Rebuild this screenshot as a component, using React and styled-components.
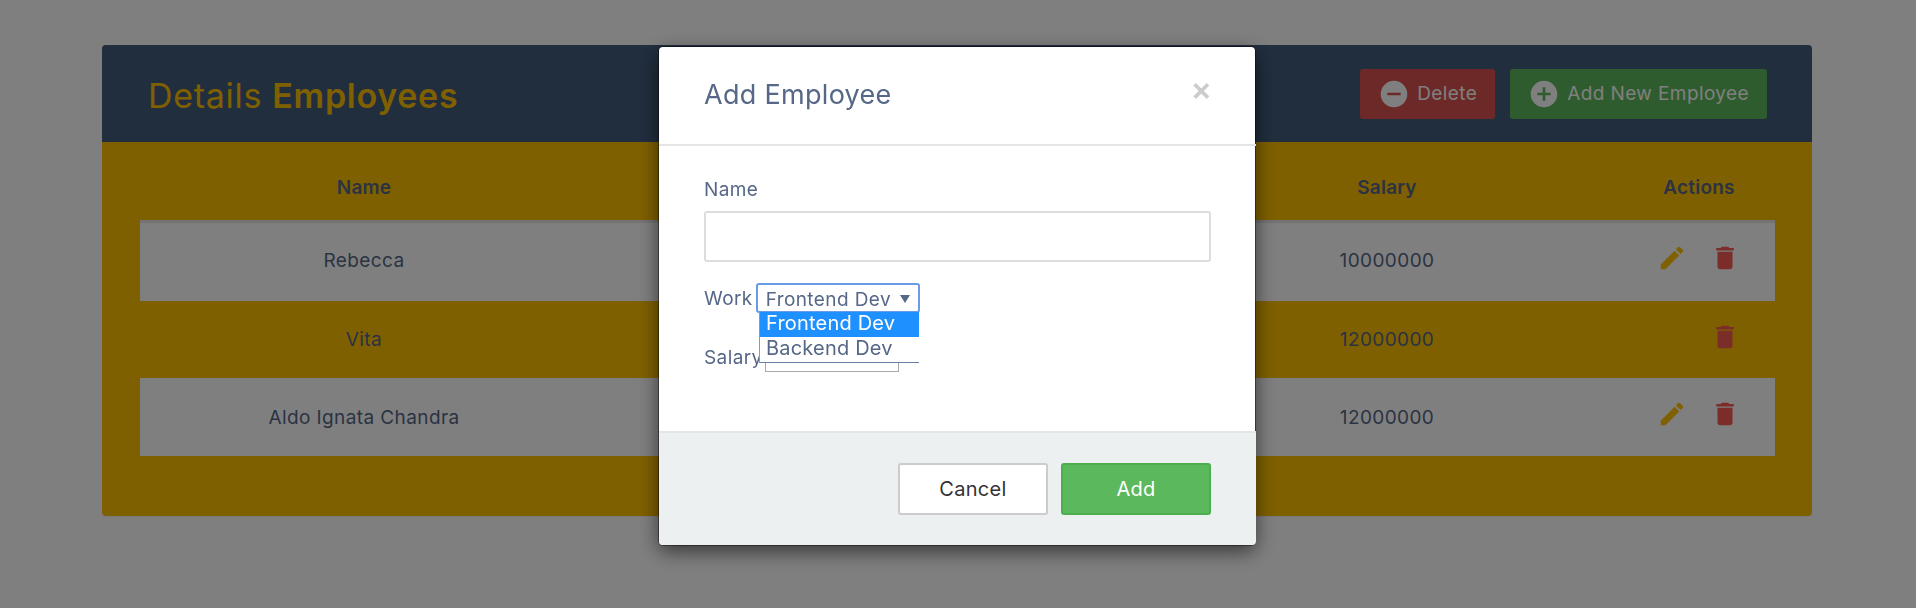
import React from 'react'
import styled, { createGlobalStyle } from 'styled-components'
import { MdAddCircle, MdDelete, MdEdit, MdRemoveCircle } from 'react-icons/md'

const GlobalStyle = createGlobalStyle`
    html, body {
        margin: 0;
        height: 100%;
        overflow: hidden;
        background: #fff;
        color: #566787;
        font-family: Inter, "Open Sans", sans-serif;
        font-size: 16px;
    }
    * {
        box-sizing: border-box;
    }
`

const Page = styled.div`
    height: 608px;
    padding: 45px 104px 0 102px;
`

const Card = styled.div`
    height: 471px;
    background: #ffc000;
    border-radius: 4px;
    box-shadow: 0 1px 1px rgba(0, 0, 0, .05);
    overflow: hidden;
`

const CardHeader = styled.div`
    height: 97px;
    padding: 0 45px 0 46px;
    display: flex;
    align-items: center;
    justify-content: space-between;
    background: #435d7d;
`

const CardTitle = styled.h2`
    margin: 3px 0 0;
    color: #ffc000;
    font-size: 34px;
    font-weight: 400;
    letter-spacing: .7px;
    b {
        font-weight: 600;
    }
`

const HeaderActions = styled.div`
    display: flex;
    gap: 15px;
`

const HeaderButton = styled.button`
    height: 50px;
    padding: 0 18px 0 20px;
    display: flex;
    align-items: center;
    gap: 7px;
    border: none;
    border-radius: 3px;
    color: #fff;
    font: inherit;
    font-size: 19px;
    letter-spacing: .4px;
    background: ${props => props.$color};
    svg {
        font-size: 32px;
        margin-left: -2px;
    }
`

const TableWrap = styled.div`
    padding: 0 37px 0 38px;
`

const Table = styled.table`
    width: 100%;
    border-collapse: separate;
    border-spacing: 0;
    table-layout: fixed;
    letter-spacing: .4px;
    th {
        height: 81px;
        padding: 12px 0 0;
        font-size: 19px;
        font-weight: 600;
        letter-spacing: .2px;
        color: #566787;
        border-bottom: 3px solid #e6e6e6;
    }
    td {
        height: 78px;
        padding: 0;
        text-align: center;
        font-size: 19px;
    }
    tbody tr:nth-child(1) td {
        padding-bottom: 3px;
    }
    tbody tr:nth-child(2) td {
        height: 77px;
    }
    tbody tr:nth-child(odd) {
        background: #fff;
    }
`

const ActionsCell = styled.div`
    display: flex;
    justify-content: center;
    align-items: center;
    gap: 23px;
    margin: -6px 0 0 -2px;
    svg {
        font-size: 30px;
    }
`

const EditIcon = styled(MdEdit)`
    color: #ffc107;
    visibility: ${props => props.$hidden ? 'hidden' : 'visible'};
`

const TrashIcon = styled(MdDelete)`
    color: #f55a52;
`

const Backdrop = styled.div`
    position: fixed;
    inset: 0;
    background: rgba(0, 0, 0, .5);
`

const Modal = styled.div`
    position: fixed;
    left: 659px;
    top: 47px;
    width: 596px;
    height: 498px;
    display: flex;
    flex-direction: column;
    background: #fff;
    border-radius: 4px;
    box-shadow: 0 0 0 1px rgba(0, 0, 0, .4), 0 6px 20px rgba(0, 0, 0, .6);
`

const ModalHeader = styled.div`
    height: 99px;
    margin-right: -1px;
    padding: 0 44px 0 45px;
    display: flex;
    align-items: center;
    justify-content: space-between;
    border-bottom: 2px solid #e5e5e5;
`

const ModalTitle = styled.h4`
    margin: -2px 0 0;
    font-size: 27px;
    font-weight: 400;
    letter-spacing: .3px;
`

const CloseButton = styled.span`
    margin: -14px 0 0 0;
    color: #ccc;
    font-size: 32px;
    font-weight: 600;
    line-height: 1;
`

const ModalBody = styled.div`
    flex: 1;
    padding: 30px 44px 0 45px;
`

const Label = styled.label`
    display: block;
    padding-top: 2px;
    font-size: 19px;
    line-height: 24px;
    letter-spacing: .4px;
`

const NameInput = styled.input`
    display: block;
    width: 100%;
    height: 51px;
    margin: 9px 0 21px;
    border: 2px solid #ddd;
    border-radius: 3px;
    background: #fff;
`

const WorkRow = styled.div`
    position: relative;
    display: flex;
    align-items: center;
    gap: 3px;
`

const SelectBox = styled.div`
    width: 164px;
    height: 30px;
    padding: 2px 8px 0;
    display: flex;
    align-items: center;
    justify-content: space-between;
    border: 2px solid #6a9be8;
    border-radius: 3px;
    font-size: 19px;
    letter-spacing: .4px;
    &::after {
        content: "";
        border-left: 5px solid transparent;
        border-right: 5px solid transparent;
        border-top: 8px solid #566787;
    }
`

const Dropdown = styled.ul`
    position: absolute;
    left: 55px;
    top: 29px;
    z-index: 2;
    width: 160px;
    margin: 0;
    padding: 0;
    list-style: none;
    background: #fff;
    border-left: 1px solid #999;
    border-bottom: 1px solid #6a7fa8;
    font-size: 20px;
    letter-spacing: .2px;
`

const DropdownItem = styled.li`
    height: 25px;
    padding: 0 6px;
    line-height: 23px;
    color: ${props => props.$active ? '#fff' : '#566787'};
    background: ${props => props.$active ? '#1e90ff' : 'transparent'};
`

const SalaryRow = styled.div`
    display: flex;
    align-items: center;
    gap: 2px;
    margin-top: 29px;
`

const SalaryInput = styled.input`
    width: 134px;
    height: 30px;
    border: 1px solid #a9a9a9;
    background: #fff;
`

const ModalFooter = styled.div`
    height: 114px;
    margin-right: -1px;
    padding: 30px 45px 0;
    display: flex;
    justify-content: flex-end;
    gap: 13px;
    background: #ecf0f1;
    border-top: 2px solid #e5e5e5;
    border-radius: 0 0 4px 4px;
`

const FooterButton = styled.button`
    width: 150px;
    height: 52px;
    border: 2px solid ${props => props.$primary ? '#4cae4c' : '#ccc'};
    border-radius: 3px;
    font: inherit;
    font-size: 20px;
    letter-spacing: .3px;
    color: ${props => props.$primary ? '#fff' : '#333'};
    background: ${props => props.$primary ? '#5cb85c' : '#fff'};
`

const employees = [
    { name: 'Rebecca', salary: '10000000' },
    { name: 'Vita', salary: '12000000', noEdit: true },
    { name: 'Aldo Ignata Chandra', salary: '12000000' }
]

export default function App() {
    return (
        <>
            <GlobalStyle />
            <Page>
                <Card>
                    <CardHeader>
                        <CardTitle>Details <b>Employees</b></CardTitle>
                        <HeaderActions>
                            <HeaderButton $color="#d9534f"><MdRemoveCircle /> Delete</HeaderButton>
                            <HeaderButton $color="#5cb85c"><MdAddCircle /> Add New Employee</HeaderButton>
                        </HeaderActions>
                    </CardHeader>
                    <TableWrap>
                        <Table>
                            <colgroup>
                                <col style={{ width: 448 }} />
                                <col />
                                <col style={{ width: 472 }} />
                                <col style={{ width: 152 }} />
                            </colgroup>
                            <thead>
                                <tr>
                                    <th>Name</th>
                                    <th></th>
                                    <th>Salary</th>
                                    <th>Actions</th>
                                </tr>
                            </thead>
                            <tbody>
                                {employees.map(e => (
                                    <tr key={e.name}>
                                        <td>{e.name}</td>
                                        <td></td>
                                        <td>{e.salary}</td>
                                        <td>
                                            <ActionsCell>
                                                <EditIcon $hidden={e.noEdit} />
                                                <TrashIcon />
                                            </ActionsCell>
                                        </td>
                                    </tr>
                                ))}
                            </tbody>
                        </Table>
                    </TableWrap>
                </Card>
            </Page>
            <Backdrop />
            <Modal>
                <ModalHeader>
                    <ModalTitle>Add Employee</ModalTitle>
                    <CloseButton>×</CloseButton>
                </ModalHeader>
                <ModalBody>
                    <Label>Name</Label>
                    <NameInput />
                    <WorkRow>
                        <Label>Work</Label>
                        <SelectBox>Frontend Dev</SelectBox>
                        <Dropdown>
                            <DropdownItem $active>Frontend Dev</DropdownItem>
                            <DropdownItem>Backend Dev</DropdownItem>
                        </Dropdown>
                    </WorkRow>
                    <SalaryRow>
                        <Label>Salary</Label>
                        <SalaryInput />
                    </SalaryRow>
                </ModalBody>
                <ModalFooter>
                    <FooterButton>Cancel</FooterButton>
                    <FooterButton $primary>Add</FooterButton>
                </ModalFooter>
            </Modal>
        </>
    )
}
